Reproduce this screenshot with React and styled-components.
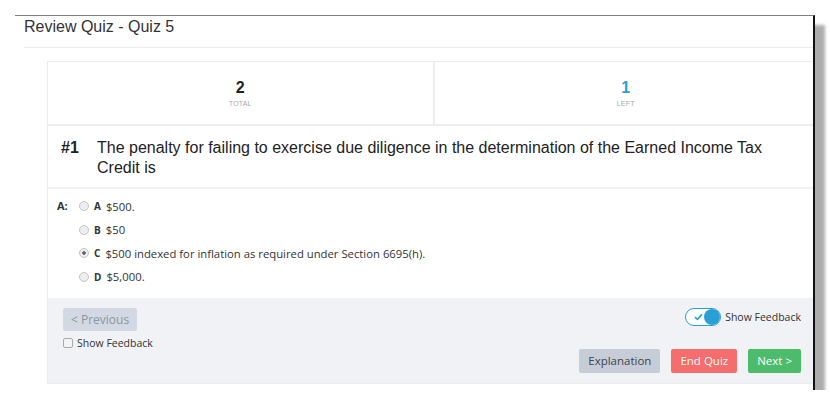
import React, { useState } from "react";
import styled, { createGlobalStyle } from "styled-components";

const GlobalStyle = createGlobalStyle`
  body {
    margin: 0;
    background: #ffffff;
    font-family: "Liberation Sans", Arial, sans-serif;
  }
`;

const options = [
  { key: "A", text: "$500." },
  { key: "B", text: "$50" },
  { key: "C", text: "$500 indexed for inflation as required under Section 6695(h)." },
  { key: "D", text: "$5,000." }
];

const App = () => {
  const [picked, setPicked] = useState("C");
  const [feedback, setFeedback] = useState(true);

  return (
    <>
      <GlobalStyle />
      <Frame>
        <Title>Review Quiz - Quiz 5</Title>
        <Card>
          <Stats>
            <Stat>
              <Count>2</Count>
              <StatLabel>TOTAL</StatLabel>
            </Stat>
            <Stat>
              <Count $accent>1</Count>
              <StatLabel>LEFT</StatLabel>
            </Stat>
          </Stats>

          <Question>
            <Num>#1</Num>
            <QuestionText>
              The penalty for failing to exercise due diligence in the
              determination of the Earned Income Tax Credit is
            </QuestionText>
          </Question>

          <Answers>
            <AnswerLabel>A:</AnswerLabel>
            <OptionList>
              {options.map((o) => (
                <Option key={o.key} onClick={() => setPicked(o.key)}>
                  <Radio $on={picked === o.key} />
                  <OptionKey>{o.key}</OptionKey>
                  <span>{o.text}</span>
                </Option>
              ))}
            </OptionList>
          </Answers>

          <Footer>
            <FooterLeft>
              <PrevButton disabled>&lt; Previous</PrevButton>
              <CheckRow>
                <CheckBox />
                Show Feedback
              </CheckRow>
            </FooterLeft>
            <FooterRight>
              <ToggleRow onClick={() => setFeedback(!feedback)}>
                <Toggle $on={feedback}>
                  <svg width="9" height="8" viewBox="0 0 9 8">
                    <path d="M1 4.2 L3.4 6.4 L8 1.4" fill="none" stroke="#2a9fd6" strokeWidth="1.6" />
                  </svg>
                  <Knob />
                </Toggle>
                Show Feedback
              </ToggleRow>
              <Actions>
                <Button $bg="#c7cdd6" $fg="#3c4450">Explanation</Button>
                <Button $bg="#f56d6d" $fg="#ffffff">End Quiz</Button>
                <Button $bg="#4cbb6c" $fg="#ffffff">Next &gt;</Button>
              </Actions>
            </FooterRight>
          </Footer>
        </Card>
      </Frame>
    </>
  );
};

export default App;

const Frame = styled.div`
  margin: 15px 0 0 15px;
  width: 800px;
  height: 375px;
  background: #fff;
  border-top: 1px solid #808080;
  border-right: 2px solid #111;
  box-shadow: 10px 10px 3px rgba(0, 0, 0, 0.32);
  overflow: hidden;
  box-sizing: border-box;
`;

const Title = styled.div`
  margin-left: 9px;
  height: 32px;
  padding-top: 1px;
  box-sizing: border-box;
  border-bottom: 1px solid #ececec;
  font-size: 16px;
  color: #333;
  line-height: 20px;
`;

const Card = styled.div`
  margin: 13px 0 0 32px;
  width: 771px;
  border: 1px solid #eaecf1;
  box-sizing: border-box;
`;

const Stats = styled.div`
  display: grid;
  grid-template-columns: 1fr 1fr;
  height: 62px;
  border-bottom: 2px solid #eceef3;
`;

const Stat = styled.div`
  display: flex;
  flex-direction: column;
  align-items: center;
  padding-top: 17px;
  & + & {
    border-left: 2px solid #eceef3;
  }
`;

const Count = styled.div`
  font-size: 16px;
  font-weight: bold;
  line-height: 18px;
  color: ${(p) => (p.$accent ? "#2a9fd6" : "#222")};
`;

const StatLabel = styled.div`
  font-size: 7px;
  color: #aaa;
  margin-top: 3px;
  letter-spacing: 0.2px;
`;

const Question = styled.div`
  display: flex;
  padding: 12px 14px 9px 13px;
  border-bottom: 2px solid #f1f2f5;
  font-size: 16px;
  line-height: 20px;
  color: #222;
`;

const Num = styled.div`
  font-weight: bold;
  width: 36px;
  flex: none;
`;

const QuestionText = styled.div`
  width: 690px;
`;

const Answers = styled.div`
  display: flex;
  padding: 10px 0 14px 9px;
  font-family: "Open Sans", sans-serif;
  font-size: 11.3px;
  color: #333;
`;

const AnswerLabel = styled.div`
  font-weight: bold;
  font-size: 11px;
  width: 22px;
  line-height: 14px;
`;

const OptionList = styled.div`
  display: flex;
  flex-direction: column;
  gap: 9.5px;
`;

const Option = styled.div`
  display: flex;
  align-items: center;
  height: 14px;
  cursor: pointer;
`;

const Radio = styled.span`
  width: 8px;
  height: 8px;
  border-radius: 50%;
  border: 1px solid #c4c4c4;
  background: ${(p) => (p.$on ? "radial-gradient(circle, #666 0 1.5px, #eee 2px)" : "#eee")};
  margin-right: 5px;
  flex: none;
`;

const OptionKey = styled.b`
  font-size: 10px;
  margin-right: 5px;
`;

const Footer = styled.div`
  display: flex;
  justify-content: space-between;
  height: 85px;
  padding: 10px 16px 10px 15px;
  box-sizing: border-box;
  background: #f1f2f6;
  font-family: "Open Sans", sans-serif;
`;

const FooterLeft = styled.div`
  display: flex;
  flex-direction: column;
  align-items: flex-start;
`;

const PrevButton = styled.button`
  height: 23px;
  padding: 0 8px;
  border: none;
  border-radius: 2px;
  background: #d3d9e2;
  color: #8b95a5;
  font-family: inherit;
  font-size: 12px;
`;

const CheckRow = styled.label`
  display: flex;
  align-items: center;
  margin-top: 5px;
  font-size: 10.5px;
  color: #333;
`;

const CheckBox = styled.span`
  width: 8px;
  height: 8px;
  border: 1px solid #aaa;
  border-radius: 2px;
  background: #f4f4f4;
  margin-right: 4px;
`;

const FooterRight = styled.div`
  display: flex;
  flex-direction: column;
  align-items: flex-end;
  justify-content: space-between;
`;

const ToggleRow = styled.div`
  display: flex;
  align-items: center;
  gap: 4px;
  font-size: 10.5px;
  color: #333;
  cursor: pointer;
`;

const Toggle = styled.span`
  position: relative;
  display: flex;
  align-items: center;
  width: 36px;
  height: 18px;
  padding-left: 8px;
  box-sizing: border-box;
  border: 1px solid #2a9fd6;
  border-radius: 10px;
  background: #fff;
`;

const Knob = styled.span`
  position: absolute;
  right: 0px;
  top: 0px;
  width: 16px;
  height: 16px;
  border-radius: 50%;
  background: #2a9fd6;
`;

const Actions = styled.div`
  display: flex;
  gap: 11px;
`;

const Button = styled.button`
  height: 24px;
  padding: 0 9px;
  border: none;
  border-radius: 2px;
  background: ${(p) => p.$bg};
  color: ${(p) => p.$fg};
  font-family: inherit;
  font-size: 11.5px;
`;
